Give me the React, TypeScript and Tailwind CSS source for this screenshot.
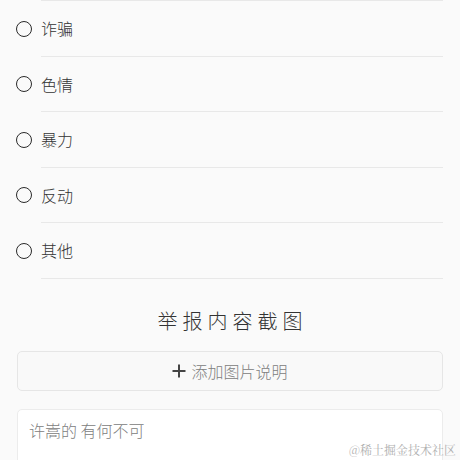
import React from "react";

const items = ["诈骗", "色情", "暴力", "反动", "其他"];

export default function App() {
  return (
    <div
      className="relative w-[460px] h-[460px] overflow-hidden bg-[#fafafa]"
      style={{ fontFamily: '"Noto Sans CJK SC", "Noto Sans", sans-serif' }}
    >
      <div className="ml-[41px] mr-[17px] h-px bg-[#e8e8e8]" />
      {items.map((t) => (
        <div key={t} className="flex h-[55.5px] items-stretch">
          <div className="w-[41px] flex items-center pl-[16px]">
            <span className="block w-[16px] h-[16px] rounded-full border-[1.5px] border-[#2a2a2a]" />
          </div>
          <div className="flex-1 mr-[17px] flex items-center border-b border-[#e8e8e8] text-[16px] font-light text-[#333]">
            {t}
          </div>
        </div>
      ))}
      <div className="pt-[30px] text-center text-[20px] leading-[24px] font-light tracking-[5px] text-[#333] pl-[5px]">
        举报内容截图
      </div>
      <div className="mx-[17px] mt-[18px] h-[40px] rounded-[5px] border border-[#e6e6e6] bg-[#f9f9f9] flex items-center justify-center gap-[5px] text-[16px] font-light text-[#808080]">
        <svg width="14" height="14" viewBox="0 0 14 14">
          <path d="M7 0.5V13.5M0.5 7H13.5" stroke="#444" strokeWidth="2" />
        </svg>
        <span>添加图片说明</span>
      </div>
      <div className="mx-[17px] mt-[18px] h-[80px] rounded-[5px] border border-[#ececec] bg-white px-[11px] pt-[8px] text-[16px] leading-[24px] font-light text-[#808080]">
        许嵩的 有何不可
      </div>
      <div
        className="absolute right-[4px] bottom-[2px] text-[12px] leading-[16px] text-[#b0b0b0]"
        style={{ fontFamily: '"Noto Serif CJK SC", "Noto Sans CJK SC", serif' }}
      >
        @稀土掘金技术社区
      </div>
    </div>
  );
}
